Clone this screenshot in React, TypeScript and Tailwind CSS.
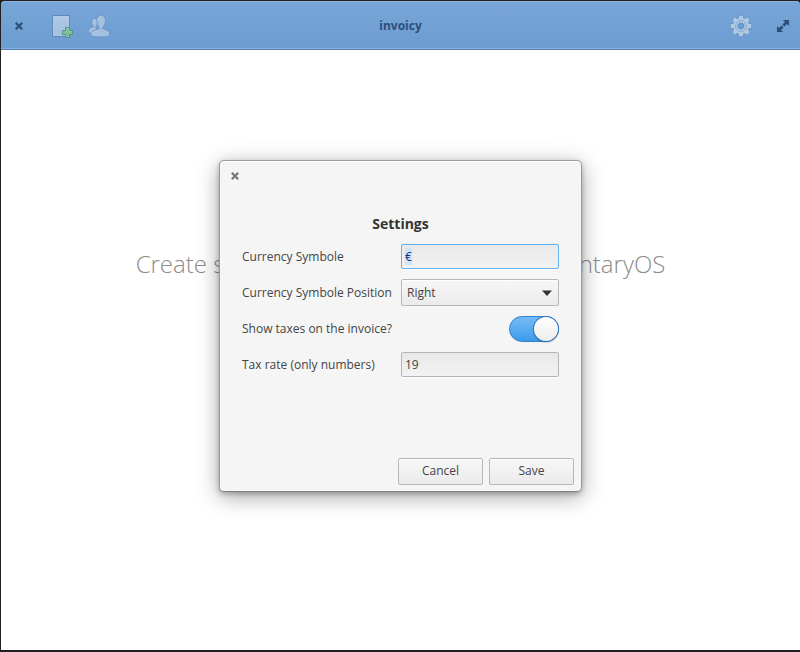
import { useEffect, useRef, useState } from "react";

function CloseIcon() {
  return (
    <svg width="8" height="8" viewBox="0 0 8 8" fill="none" stroke="currentColor" strokeWidth="2.2" aria-hidden="true">
      <path d="M.8.8 7.2 7.2M7.2.8.8 7.2" />
    </svg>
  );
}

function NewDocumentIcon() {
  return (
    <svg width="24" height="24" viewBox="0 0 24 24" aria-hidden="true">
      <defs>
        <linearGradient id="sheet" x1="0" y1="0" x2="0" y2="1">
          <stop offset="0" stopColor="#aec8e4" />
          <stop offset="1" stopColor="#a2bfdf" />
        </linearGradient>
      </defs>
      <rect x="2.5" y="1.5" width="17" height="21" fill="url(#sheet)" stroke="#5d8abb" />
      <path d="M3.500 2.500h15v19h-15z" fill="none" stroke="#bdd3ea" strokeOpacity=".35" />
      <path d="M15.500 13.500h4v3h3v4h-3v3h-4v-3h-3v-4h3z" fill="#80bd9a" stroke="#4f9585" />
      <path d="M16.500 17v-2.500h2v3h3" fill="none" stroke="#9dd0ac" strokeOpacity=".5" />
    </svg>
  );
}

function PeopleIcon() {
  return (
    <svg width="24" height="24" viewBox="0 0 24 24" fill="#a5c1e0" stroke="#6791c0" strokeWidth=".8" aria-hidden="true">
      <path d="M1.300 17c.3-2 1.500-3 3.700-3.500 1-.3 1.600-.6 1.600-1.400-1.300-.9-2-2.300-2-4 0-2.300 1.200-3.600 3-3.600s3.200 1.300 3.200 3.600c0 1.700-.7 3.100-2 4l1 7.100H2.500C1.500 19 1.100 18 1.300 17z" />
      <path d="M9.800 6.700c0 2.900 1 5.300 2.500 6.700 0 1.200-.8 1.700-2.300 2.200C7.100 16.500 4.700 17.200 4 19c-.4 1.300-.2 2.500.9 2.900 4.500 1.500 12.500 1.500 16.800 0 1.100-.5 1.200-1.900.7-3.200-.7-1.800-2.400-2.600-4.600-3.200-1.500-.5-2.200-.9-2.200-2.100 1.700-1.500 2.800-3.900 2.800-6.700 0-3.300-1.800-5.400-4.300-5.400S9.800 3.400 9.800 6.700z" />
      <path d="M5.200 19.500c1-1.800 3-2.200 5.200-2.900M11 7c0-2.800 1-4.400 3-4.400" fill="none" stroke="#b8cfe8" />
      <path d="M12 14c1 1.300 2.800 1.300 3.700 0" fill="none" stroke="#84a9d3" />
    </svg>
  );
}

const teeth = [0, 45, 90, 135, 180, 225, 270, 315];

function GearIcon() {
  return (
    <svg width="24" height="24" viewBox="0 0 24 24" aria-hidden="true">
      <g fill="#6892c1">
        <circle cx="12" cy="12" r="8.700" />
        {teeth.map((angle) => (
          <rect key={angle} x="9.300" y="1" width="5.400" height="6" rx=".8" transform={`rotate(${angle} 12 12)`} />
        ))}
      </g>
      <g fill="#b0c9e3">
        <circle cx="12" cy="12" r="8" />
        {teeth.map((angle) => (
          <rect key={angle} x="10" y="1.700" width="4" height="6" rx=".4" transform={`rotate(${angle} 12 12)`} />
        ))}
      </g>
      <circle cx="12" cy="12" r="5.500" fill="#a6c2df" stroke="#8baed3" />
      <circle cx="12" cy="12" r="2.800" fill="#6b9dd3" stroke="#618fc1" />
    </svg>
  );
}

function ExpandIcon() {
  return (
    <svg width="12" height="12" viewBox="0 0 12 12" aria-hidden="true">
      <path d="M6 0h6v6l-2-2-2.600 2.600-2-2L8 2zM0 6l2 2 2.600-2.600 2 2L4 10l2 2H0z" fill="currentColor" />
    </svg>
  );
}

const field =
  "w-full rounded-[2px] border bg-linear-to-b from-[#e9e9e9] to-[#f2f2f2] px-[3px] text-[12px] shadow-[0_1px_0_#fff] outline-none";
const button =
  "h-[27px] w-[85px] rounded-[2px] border border-[#b7b7b7] bg-linear-to-b from-[#f7f7f7] to-[#ebebeb] text-[12px] shadow-[inset_0_1px_0_#fff]";

export default function App() {
  const [symbol, setSymbol] = useState("€");
  const [position, setPosition] = useState("Right");
  const [taxes, setTaxes] = useState(true);
  const [rate, setRate] = useState("19");
  const symbolInput = useRef<HTMLInputElement>(null);

  useEffect(() => {
    symbolInput.current?.focus();
    symbolInput.current?.select();
  }, []);

  return (
    <div className="relative flex min-h-screen flex-col border-t border-b-2 border-l border-[#202020] bg-[#202020] font-['Open_Sans','Noto_Sans',sans-serif] text-[#444]">
      <header className="grid h-[49px] shrink-0 grid-cols-[1fr_auto_1fr] items-center rounded-t-[4px] border-b border-[#4f7fb5] bg-linear-to-b from-[#78a5d8] to-[#6b9dd0] px-[11px] pt-[2px] text-[#2c4e7a] shadow-[inset_0_1px_0_#8fb5df,inset_0_-1px_0_#88b0dc]">
        <div className="flex items-center">
          <button aria-label="Close window" className="flex h-6 w-[14px] items-center justify-center">
            <CloseIcon />
          </button>
          <button aria-label="New invoice" className="ml-6">
            <NewDocumentIcon />
          </button>
          <button aria-label="Customers" className="ml-[13px]">
            <PeopleIcon />
          </button>
        </div>
        <h1 className="text-[12px] font-bold">invoicy</h1>
        <div className="flex items-center justify-end gap-6">
          <button aria-label="Settings">
            <GearIcon />
          </button>
          <button aria-label="Maximize">
            <ExpandIcon />
          </button>
        </div>
      </header>

      <main className="flex flex-1 flex-col items-center bg-white pt-[198px]">
        <h2 className="text-[24px] leading-8 font-light whitespace-nowrap text-[#8c8c8c]">
          Create simple invoices designed in elementaryOS
        </h2>
      </main>

      <div className="absolute inset-0 flex items-center justify-center">
        <div
          role="dialog"
          aria-labelledby="settings-title"
          className="flex w-[363px] flex-col rounded-[5px] border border-[#9a9a9a] border-b-[#808080] bg-[#f5f5f5] shadow-[inset_0_1px_0_#fff,0_5px_22px_rgba(0,0,0,0.35),0_2px_5px_rgba(0,0,0,0.25)]"
        >
          <button aria-label="Close settings" className="mt-[7px] ml-[7px] flex size-4 items-center justify-center text-[#777]">
            <CloseIcon />
          </button>
          <form className="flex flex-col" onSubmit={(e) => e.preventDefault()}>
            <h2 id="settings-title" className="mt-[30px] text-center text-[14px] leading-5 font-bold text-[#333]">
              Settings
            </h2>
            <div className="mt-[5px] grid auto-rows-[36px] grid-cols-[1fr_158px] items-center px-[22px] text-[12px]">
              <label htmlFor="symbol">Currency Symbole</label>
              <input
                id="symbol"
                ref={symbolInput}
                value={symbol}
                onChange={(e) => setSymbol(e.target.value)}
                className={`${field} h-[25px] border-[#64b0f0] selection:bg-[#cfe5f5] selection:text-[#0d2f91]`}
              />
              <label htmlFor="position">Currency Symbole Position</label>
              <div className="relative">
                <select
                  id="position"
                  value={position}
                  onChange={(e) => setPosition(e.target.value)}
                  className="block h-[27px] w-full appearance-none rounded-[2px] border border-[#b7b7b7] bg-linear-to-b from-[#f7f7f7] to-[#ebebeb] px-[5px] text-[12px] shadow-[inset_0_1px_0_#fff] outline-none"
                >
                  <option>Right</option>
                  <option>Left</option>
                </select>
                <svg className="pointer-events-none absolute top-[11px] right-[7px]" width="10" height="6" viewBox="0 0 10 6" aria-hidden="true">
                  <path d="M0 .5h10L5 6z" fill="#333" />
                </svg>
              </div>
              <label htmlFor="taxes">Show taxes on the invoice?</label>
              <input
                id="taxes"
                type="checkbox"
                role="switch"
                checked={taxes}
                onChange={(e) => setTaxes(e.target.checked)}
                className="flex h-[26px] w-[50px] appearance-none items-center justify-start justify-self-end rounded-full border border-[#2e83cf] bg-[#ccc] before:size-6 before:rounded-full before:bg-linear-to-b before:from-white before:to-[#ededed] before:shadow-[0_0_0_1px_#2b75b8,0_1px_2px_rgba(0,0,0,0.4)] before:content-[''] checked:justify-end checked:bg-linear-to-b checked:from-[#74bbf5] checked:to-[#3d9bea]"
              />
              <label htmlFor="rate">Tax rate (only numbers)</label>
              <input
                id="rate"
                inputMode="numeric"
                value={rate}
                onChange={(e) => setRate(e.target.value)}
                className={`${field} h-[25px] border-[#b5b5b5]`}
              />
            </div>
            <div className="mt-[75px] flex justify-end gap-[6px] pr-[7px] pb-[6px]">
              <button type="button" className={button}>
                Cancel
              </button>
              <button type="submit" className={button}>
                Save
              </button>
            </div>
          </form>
        </div>
      </div>
    </div>
  );
}
